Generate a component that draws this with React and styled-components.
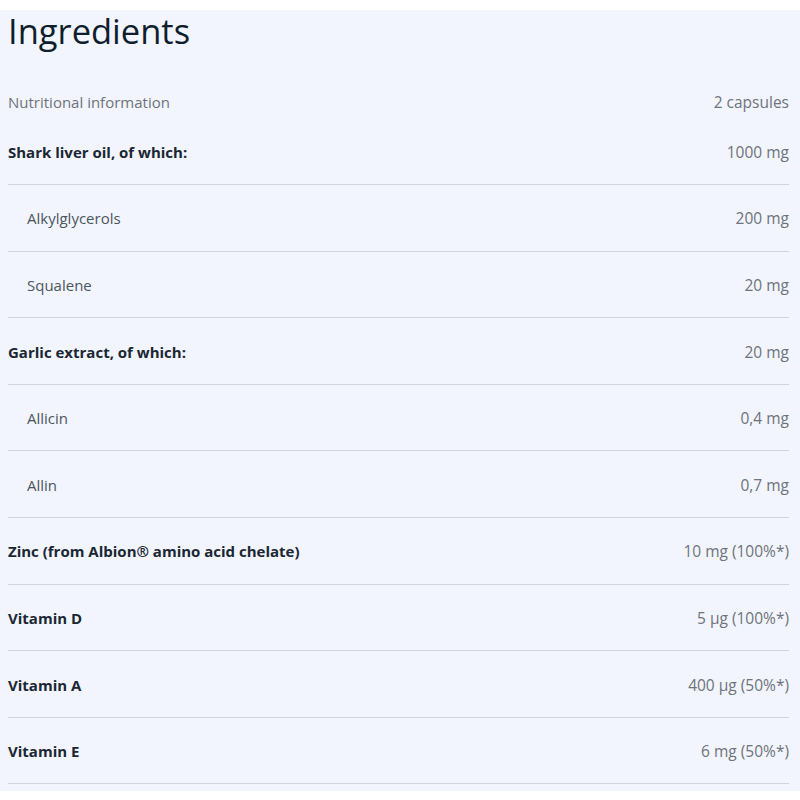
import React from "react";
import styled, { createGlobalStyle } from "styled-components";

const GlobalStyle = createGlobalStyle`
  *, *::before, *::after {
    box-sizing: border-box;
  }
  body {
    margin: 0;
    background: #ffffff;
    font-family: "Open Sans", "Lato", sans-serif;
  }
`;

const Page = styled.div`
  padding: 10px 0;
`;

const Panel = styled.section`
  background-color: #f2f5fd;
  padding: 0 11px 7px 8px;
`;

const Title = styled.h2`
  margin: 0;
  height: 75.5px;
  font-size: 34.5px;
  font-weight: 400;
  color: #0f1e2c;
  line-height: 42px;
`;

const Table = styled.div`
  display: flex;
  flex-direction: column;
`;

const HeadRow = styled.div`
  display: flex;
  justify-content: space-between;
  align-items: center;
  height: 33px;
  font-size: 15px;
  color: #6f737b;
`;

const Row = styled.div`
  display: flex;
  justify-content: space-between;
  align-items: center;
  height: 66.6px;
  padding-top: 1px;
  border-bottom: 1px solid #cfd4df;
`;

const Name = styled.span`
  font-size: 15px;
  padding-left: ${(p) => (p.$sub ? "19px" : "0")};
  font-weight: ${(p) => (p.$sub ? 400 : 700)};
  color: ${(p) => (p.$sub ? "#4c5660" : "#1b2733")};
`;

const Value = styled.span`
  font-size: 15.5px;
  color: #6f737b;
`;

const rows = [
  { name: "Shark liver oil, of which:", value: "1000 mg" },
  { name: "Alkylglycerols", value: "200 mg", sub: true },
  { name: "Squalene", value: "20 mg", sub: true },
  { name: "Garlic extract, of which:", value: "20 mg" },
  { name: "Allicin", value: "0,4 mg", sub: true },
  { name: "Allin", value: "0,7 mg", sub: true },
  { name: "Zinc (from Albion® amino acid chelate)", value: "10 mg (100%*)" },
  { name: "Vitamin D", value: "5 µg (100%*)" },
  { name: "Vitamin A", value: "400 µg (50%*)" },
  { name: "Vitamin E", value: "6 mg (50%*)" },
];

export default function App() {
  return (
    <Page>
      <GlobalStyle />
      <Panel>
        <Title>Ingredients</Title>
        <Table>
          <HeadRow>
            <span>Nutritional information</span>
            <Value>2 capsules</Value>
          </HeadRow>
          {rows.map((r) => (
            <Row key={r.name}>
              <Name $sub={r.sub}>{r.name}</Name>
              <Value>{r.value}</Value>
            </Row>
          ))}
        </Table>
      </Panel>
    </Page>
  );
}
